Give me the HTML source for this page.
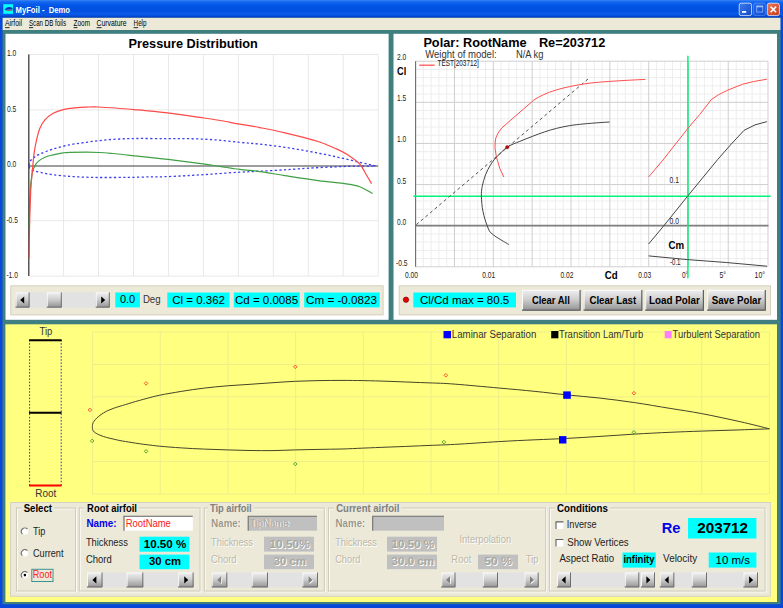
<!DOCTYPE html>
<html><head><meta charset="utf-8"><title>MyFoil - Demo</title>
<style>html,body{margin:0;padding:0;background:#3f7f7f;overflow:hidden}svg{display:block;font-family:"Liberation Sans", sans-serif}</style>
</head><body>
<svg width="783" height="608" viewBox="0 0 783 608">
<defs>
<linearGradient id="tb" x1="0" y1="0" x2="0" y2="1">
<stop offset="0" stop-color="#3b86f5"/><stop offset="0.08" stop-color="#1a6cf2"/><stop offset="0.2" stop-color="#0a5eec"/><stop offset="0.36" stop-color="#0354e4"/><stop offset="0.6" stop-color="#0250e0"/><stop offset="0.78" stop-color="#0a5aea"/><stop offset="0.87" stop-color="#0650dc"/><stop offset="1" stop-color="#0036b8"/>
</linearGradient>
<linearGradient id="btn" x1="0" y1="0" x2="0" y2="1">
<stop offset="0" stop-color="#f0f0f0"/><stop offset="0.45" stop-color="#cfcfcf"/><stop offset="1" stop-color="#929292"/>
</linearGradient>
<linearGradient id="cb" x1="0" y1="0" x2="1" y2="1">
<stop offset="0" stop-color="#3c7cf0"/><stop offset="1" stop-color="#1648c8"/>
</linearGradient>
<linearGradient id="cx" x1="0" y1="0" x2="1" y2="1">
<stop offset="0" stop-color="#ee7a5a"/><stop offset="1" stop-color="#c83a18"/>
</linearGradient>
</defs>

<rect x="0.00" y="0.00" width="783.00" height="608.00" fill="#3f7f7f" />
<rect x="0.00" y="0.00" width="783.00" height="17.80" fill="url(#tb)" />
<rect x="2.30" y="17.80" width="778.40" height="12.20" fill="#ece9d8" />
<rect x="0.00" y="17.00" width="2.50" height="591.00" fill="#0848dc" />
<rect x="780.60" y="17.00" width="2.40" height="591.00" fill="#0848dc" />
<rect x="0.00" y="604.20" width="783.00" height="3.80" fill="#0848dc" />
<rect x="3.30" y="4.20" width="9.70" height="9.60" fill="#00ffff" />
<path d="M4.5,10 C6,7 9,6.1 12.3,7.8 L12.5,9.7 C9.5,9.3 7,9.7 4.5,10 Z" fill="#1030c0"/>
<path d="M4.5,10.1 C7,9.8 9.5,9.5 12.5,9.8 L12.4,10.6 C9.5,10.8 7,10.9 4.5,10.1 Z" fill="#d02020"/>
<text x="15.50" y="13.00" font-size="9" fill="#fff" font-weight="bold" textLength="54.50" lengthAdjust="spacingAndGlyphs" style="white-space:pre">MyFoil -  Demo</text>
<rect x="739.2" y="3.2" width="12.4" height="12.4" rx="2" fill="url(#cb)" stroke="#ffffff" stroke-opacity="0.9" stroke-width="0.8" opacity="1"/>
<rect x="742.00" y="11.00" width="4.20" height="1.80" fill="#fff" />
<rect x="753.5" y="3.2" width="11.9" height="12.4" rx="2" fill="url(#cb)" stroke="#ffffff" stroke-opacity="0.5" stroke-width="0.8" opacity="0.55"/>
<rect x="756.7" y="6" width="6" height="6" fill="none" stroke="#fff" stroke-opacity="0.45" stroke-width="1"/>
<rect x="756.7" y="5.8" width="6" height="1.6" fill="#fff" fill-opacity="0.45"/>
<rect x="767.3" y="3.2" width="12.1" height="12.4" rx="2" fill="url(#cx)" stroke="#ffffff" stroke-opacity="0.9" stroke-width="0.8" opacity="1"/>
<path d="M770.55,6.6000000000000005 L776.1499999999999,12.2 M776.1499999999999,6.6000000000000005 L770.55,12.2" stroke="#fff" stroke-width="1.5" fill="none"/>
<text x="5.1" y="26.3" font-size="8.2" fill="#000" textLength="16.9" lengthAdjust="spacingAndGlyphs"><tspan text-decoration="underline">A</tspan>irfoil</text>
<text x="29" y="26.3" font-size="8.2" fill="#000" textLength="37.0" lengthAdjust="spacingAndGlyphs"><tspan text-decoration="underline">S</tspan>can DB foils</text>
<text x="73.6" y="26.3" font-size="8.2" fill="#000" textLength="16.4" lengthAdjust="spacingAndGlyphs"><tspan text-decoration="underline">Z</tspan>oom</text>
<text x="96.6" y="26.3" font-size="8.2" fill="#000" textLength="29.9" lengthAdjust="spacingAndGlyphs"><tspan text-decoration="underline">C</tspan>urvature</text>
<text x="133.6" y="26.3" font-size="8.2" fill="#000" textLength="12.9" lengthAdjust="spacingAndGlyphs"><tspan text-decoration="underline">H</tspan>elp</text>
<rect x="5.50" y="33.80" width="383.10" height="286.00" fill="#ffffff" />
<text x="128.60" y="48.30" font-size="12.6" fill="#000" font-weight="bold" textLength="129.30" lengthAdjust="spacingAndGlyphs" >Pressure Distribution</text>
<path d="M63.56,54.5 V276.1 M98.52,54.5 V276.1 M133.48,54.5 V276.1 M168.44,54.5 V276.1 M203.40,54.5 V276.1 M238.36,54.5 V276.1 M273.32,54.5 V276.1 M308.28,54.5 V276.1 M343.24,54.5 V276.1 M378.20,54.5 V276.1 M28.6,54.50 H378.2 M28.6,109.90 H378.2 M28.6,220.70 H378.2 M28.6,276.10 H378.2" stroke="#e8e8e8" stroke-width="1" fill="none"/>
<path d="M28.6,166.0 H378.2" stroke="#7c7c7c" stroke-width="1.6" fill="none"/>
<path d="M28.8,54.5 V276.1" stroke="#404040" stroke-width="1.1" fill="none"/>
<text x="7.00" y="56.30" font-size="8.6" fill="#222" font-weight="normal" textLength="9.30" lengthAdjust="spacingAndGlyphs" >1.0</text>
<text x="7.00" y="111.80" font-size="8.6" fill="#222" font-weight="normal" textLength="9.30" lengthAdjust="spacingAndGlyphs" >0.5</text>
<text x="7.00" y="167.30" font-size="8.6" fill="#222" font-weight="normal" textLength="9.30" lengthAdjust="spacingAndGlyphs" >0.0</text>
<text x="6.40" y="222.80" font-size="8.6" fill="#222" font-weight="normal" textLength="11.50" lengthAdjust="spacingAndGlyphs" >-0.5</text>
<text x="6.40" y="277.80" font-size="8.6" fill="#222" font-weight="normal" textLength="11.50" lengthAdjust="spacingAndGlyphs" >-1.0</text>
<path d="M28.9,165.5 C29.1,164.8 29.3,162.7 30.0,161.5 C30.7,160.3 31.6,159.3 33.3,158.1 C34.9,156.8 36.6,155.5 39.9,154.0 C43.2,152.5 48.2,150.5 53.2,149.0 C58.2,147.5 64.3,145.9 69.8,144.8 C75.3,143.7 80.9,143.1 86.4,142.3 C91.9,141.5 97.5,140.8 103.0,140.2 C108.5,139.6 114.2,139.3 119.7,139.0 C125.2,138.7 128.8,138.6 136.3,138.5 C143.9,138.4 156.1,138.6 165.0,138.6 C173.9,138.6 181.5,138.5 189.8,138.7 C198.1,138.9 206.4,139.2 214.7,139.8 C223.0,140.4 232.1,141.6 239.7,142.3 C247.2,143.0 252.5,143.4 260.0,144.2 C267.5,145.0 276.6,146.1 284.9,147.3 C293.2,148.5 301.5,150.0 309.8,151.5 C318.1,153.0 326.5,154.7 334.8,156.5 C343.1,158.3 352.8,160.7 359.7,162.3 C366.6,163.9 373.3,165.4 376.0,166.0" fill="none" stroke="#3c3cf0" stroke-width="1.3" stroke-dasharray="2.2 2.4"/>
<path d="M28.9,166.5 C29.1,166.8 29.3,167.8 30.0,168.5 C30.7,169.2 31.4,169.9 33.3,170.6 C35.2,171.3 38.3,171.9 41.6,172.6 C44.9,173.3 48.5,174.1 53.2,174.7 C57.9,175.3 64.3,176.0 69.8,176.4 C75.3,176.8 80.9,177.0 86.4,177.2 C91.9,177.4 96.1,177.5 103.0,177.5 C109.9,177.5 120.2,177.5 128.0,177.4 C135.8,177.3 143.8,177.0 150.0,176.9 C156.2,176.8 158.4,176.9 165.0,176.7 C171.6,176.5 181.5,176.0 189.8,175.5 C198.1,175.0 206.4,174.5 214.7,173.9 C223.0,173.3 232.1,172.6 239.7,172.2 C247.2,171.8 252.5,171.6 260.0,171.2 C267.5,170.8 276.6,170.3 284.9,169.8 C293.2,169.3 301.5,168.6 309.8,168.1 C318.1,167.6 327.1,167.2 334.8,166.9 C342.6,166.6 349.4,166.2 356.3,166.1 C363.2,166.0 372.7,166.1 376.0,166.1" fill="none" stroke="#3c3cf0" stroke-width="1.3" stroke-dasharray="2.2 2.4"/>
<path d="M28.9,229.0 C29.0,225.0 29.4,211.8 29.6,205.0 C29.9,198.2 30.1,192.2 30.4,188.0 C30.7,183.8 30.9,182.5 31.3,179.7 C31.7,176.9 31.9,173.8 32.5,171.4 C33.1,169.1 34.0,167.3 35.0,165.6 C36.0,163.9 36.6,162.8 38.3,161.4 C39.9,160.0 42.4,158.4 44.9,157.3 C47.4,156.2 50.2,155.6 53.2,154.8 C56.2,154.1 60.4,153.2 63.2,152.8 C66.0,152.4 65.9,152.4 69.8,152.3 C73.7,152.2 81.4,152.2 86.4,152.2 C91.4,152.2 95.3,152.3 99.7,152.5 C104.1,152.7 108.3,153.1 113.0,153.5 C117.7,153.9 123.5,154.6 128.0,155.1 C132.5,155.6 133.3,155.7 140.0,156.4 C146.7,157.1 157.7,158.2 168.2,159.4 C178.7,160.7 194.4,162.7 203.0,163.9 C211.6,165.1 213.6,165.5 219.7,166.4 C225.8,167.3 233.0,168.5 239.7,169.4 C246.4,170.3 252.5,170.6 260.0,171.6 C267.5,172.6 275.2,174.1 284.9,175.6 C294.6,177.1 307.9,179.2 318.1,180.6 C328.4,182.0 339.5,182.9 346.4,183.9 C353.3,184.9 355.3,185.1 359.7,186.7 C364.1,188.3 370.5,192.4 372.6,193.5" fill="none" stroke="#3fa043" stroke-width="1.2" />
<path d="M28.9,258.0 C29.0,252.5 29.3,236.4 29.6,225.0 C29.9,213.6 30.3,198.9 30.8,189.7 C31.3,180.5 31.9,175.8 32.5,169.7 C33.0,163.6 33.4,158.1 34.1,153.1 C34.8,148.1 35.6,144.0 36.6,139.8 C37.6,135.7 38.5,131.5 39.9,128.2 C41.3,124.9 42.7,122.4 44.9,119.9 C47.1,117.4 50.2,115.0 53.2,113.3 C56.2,111.6 59.6,110.5 63.2,109.6 C66.8,108.7 70.9,108.2 74.8,107.8 C78.7,107.4 82.5,107.2 86.4,107.1 C90.3,107.0 93.3,106.8 98.1,107.0 C102.9,107.2 109.4,107.6 115.3,108.0 C121.2,108.4 127.8,109.1 133.7,109.6 C139.6,110.1 145.0,110.5 150.6,111.1 C156.2,111.6 161.5,112.2 167.4,112.9 C173.3,113.6 179.7,114.6 185.8,115.4 C191.9,116.2 198.5,117.2 204.2,118.0 C209.9,118.8 214.1,119.5 220.0,120.5 C225.9,121.5 233.0,122.9 239.7,124.1 C246.4,125.3 252.5,126.1 260.0,127.6 C267.5,129.1 275.2,130.6 284.9,132.9 C294.6,135.2 309.8,138.9 318.1,141.5 C326.4,144.1 330.1,146.1 334.8,148.2 C339.5,150.3 342.2,151.4 346.4,154.0 C350.5,156.6 356.4,160.5 359.7,164.0 C363.0,167.5 364.3,171.5 366.3,174.8 C368.3,178.1 370.7,182.1 371.6,183.6" fill="none" stroke="#ff4848" stroke-width="1.2" />
<path d="M28.8,54.5 V276.1" stroke="#303030" stroke-width="1.1" stroke-opacity="0.45" fill="none"/>
<rect x="10.30" y="285.40" width="373.20" height="29.90" fill="#ece9d8" />
<rect x="10.80" y="285.90" width="372.20" height="28.90" fill="none" stroke="#d6d2c2" stroke-width="1"/>
<rect x="15.60" y="292.40" width="94.20" height="15.20" fill="#e2e2e2" />
<rect x="15.60" y="292.40" width="14.00" height="15.20" fill="url(#btn)" />
<path d="M16.10,307.10 L16.10,292.90 L29.10,292.90" fill="none" stroke="#f8f8f8" stroke-width="1"/>
<path d="M15.60,307.10 L29.10,307.10 L29.10,292.40" fill="none" stroke="#6e6e6e" stroke-width="1"/>
<path d="M20.20,300.00 L24.20,296.40 L24.20,303.60 Z" fill="#000"/>
<rect x="46.80" y="292.40" width="15.00" height="15.20" fill="url(#btn)" />
<path d="M47.30,307.10 L47.30,292.90 L61.30,292.90" fill="none" stroke="#f8f8f8" stroke-width="1"/>
<path d="M46.80,307.10 L61.30,307.10 L61.30,292.40" fill="none" stroke="#6e6e6e" stroke-width="1"/>
<rect x="95.80" y="292.40" width="14.00" height="15.20" fill="url(#btn)" />
<path d="M96.30,307.10 L96.30,292.90 L109.30,292.90" fill="none" stroke="#f8f8f8" stroke-width="1"/>
<path d="M95.80,307.10 L109.30,307.10 L109.30,292.40" fill="none" stroke="#6e6e6e" stroke-width="1"/>
<path d="M105.20,300.00 L101.20,296.40 L101.20,303.60 Z" fill="#000"/>
<rect x="115.30" y="292.50" width="24.60" height="14.90" fill="#00ffff" />
<text x="119.90" y="303.40" font-size="11" fill="#000" font-weight="normal" textLength="15.30" lengthAdjust="spacingAndGlyphs" >0.0</text>
<text x="142.90" y="303.20" font-size="10.2" fill="#333" font-weight="normal" textLength="17.70" lengthAdjust="spacingAndGlyphs" >Deg</text>
<rect x="167.30" y="292.50" width="62.20" height="14.90" fill="#00ffff" />
<text x="172.30" y="303.50" font-size="11.6" fill="#000" font-weight="normal" textLength="52.60" lengthAdjust="spacingAndGlyphs" >Cl = 0.362</text>
<rect x="233.80" y="292.50" width="65.90" height="14.90" fill="#00ffff" />
<text x="235.00" y="303.50" font-size="11.6" fill="#000" font-weight="normal" textLength="63.10" lengthAdjust="spacingAndGlyphs" >Cd = 0.0085</text>
<rect x="304.20" y="292.50" width="75.50" height="14.90" fill="#00ffff" />
<text x="306.10" y="303.50" font-size="11.6" fill="#000" font-weight="normal" textLength="70.80" lengthAdjust="spacingAndGlyphs" >Cm = -0.0823</text>
<rect x="393.50" y="33.80" width="383.50" height="286.00" fill="#ffffff" />
<text x="423.40" y="47.30" font-size="12.6" fill="#000" font-weight="bold" textLength="103.20" lengthAdjust="spacingAndGlyphs" >Polar: RootName</text>
<text x="538.90" y="47.30" font-size="12.6" fill="#000" font-weight="bold" textLength="66.40" lengthAdjust="spacingAndGlyphs" >Re=203712</text>
<text x="425.20" y="57.50" font-size="10.6" fill="#333" font-weight="normal" textLength="71.50" lengthAdjust="spacingAndGlyphs" >Weight of model:</text>
<text x="515.90" y="57.50" font-size="10.6" fill="#333" font-weight="normal" textLength="27.60" lengthAdjust="spacingAndGlyphs" >N/A kg</text>
<path d="M423.37,61.2 V266.8 M431.14,61.2 V266.8 M438.91,61.2 V266.8 M446.68,61.2 V266.8 M462.22,61.2 V266.8 M469.99,61.2 V266.8 M477.76,61.2 V266.8 M485.53,61.2 V266.8 M501.07,61.2 V266.8 M508.84,61.2 V266.8 M516.61,61.2 V266.8 M524.38,61.2 V266.8 M539.92,61.2 V266.8 M547.69,61.2 V266.8 M555.46,61.2 V266.8 M563.23,61.2 V266.8 M578.77,61.2 V266.8 M586.54,61.2 V266.8 M594.31,61.2 V266.8 M602.08,61.2 V266.8 M617.62,61.2 V266.8 M625.39,61.2 V266.8 M633.16,61.2 V266.8 M640.93,61.2 V266.8 M656.65,61.2 V266.8 M664.61,61.2 V266.8 M672.56,61.2 V266.8 M680.51,61.2 V266.8 M696.42,61.2 V266.8 M704.37,61.2 V266.8 M712.33,61.2 V266.8 M720.28,61.2 V266.8 M736.19,61.2 V266.8 M744.14,61.2 V266.8 M752.09,61.2 V266.8 M760.05,61.2 V266.8 M415.6,69.42 H768 M415.6,77.65 H768 M415.6,85.87 H768 M415.6,94.10 H768 M415.6,110.54 H768 M415.6,118.77 H768 M415.6,126.99 H768 M415.6,135.22 H768 M415.6,151.66 H768 M415.6,159.89 H768 M415.6,168.11 H768 M415.6,176.34 H768 M415.6,192.78 H768 M415.6,201.01 H768 M415.6,209.23 H768 M415.6,217.46 H768 M415.6,233.90 H768 M415.6,242.13 H768 M415.6,250.35 H768 M415.6,258.58 H768" stroke="#ededed" stroke-width="1" fill="none"/>
<path d="M415.60,61.2 V266.8 M454.45,61.2 V266.8 M493.30,61.2 V266.8 M532.15,61.2 V266.8 M571.00,61.2 V266.8 M609.85,61.2 V266.8 M648.70,61.2 V266.8 M688.47,61.2 V266.8 M728.23,61.2 V266.8 M768.00,61.2 V266.8 M415.6,61.20 H768 M415.6,102.32 H768 M415.6,143.44 H768 M415.6,184.56 H768 M415.6,225.68 H768 M415.6,266.80 H768" stroke="#cfcfcf" stroke-width="1" fill="none"/>
<path d="M415.6,225.68 H768.5" stroke="#808080" stroke-width="1.7" fill="none"/>
<path d="M415.6,61.2 V266.8" stroke="#6a6a6a" stroke-width="1.05" fill="none"/>
<text x="397.00" y="60.20" font-size="8.6" fill="#222" font-weight="normal" textLength="9.20" lengthAdjust="spacingAndGlyphs" >2.0</text>
<text x="397.00" y="101.32" font-size="8.6" fill="#222" font-weight="normal" textLength="9.20" lengthAdjust="spacingAndGlyphs" >1.5</text>
<text x="397.00" y="142.44" font-size="8.6" fill="#222" font-weight="normal" textLength="9.20" lengthAdjust="spacingAndGlyphs" >1.0</text>
<text x="397.00" y="183.56" font-size="8.6" fill="#222" font-weight="normal" textLength="9.20" lengthAdjust="spacingAndGlyphs" >0.5</text>
<text x="397.00" y="224.68" font-size="8.6" fill="#222" font-weight="normal" textLength="9.20" lengthAdjust="spacingAndGlyphs" >0.0</text>
<text x="396.00" y="265.80" font-size="8.6" fill="#222" font-weight="normal" textLength="11.50" lengthAdjust="spacingAndGlyphs" >-0.5</text>
<text x="397.00" y="75.20" font-size="10.6" fill="#000" font-weight="bold" textLength="9.20" lengthAdjust="spacingAndGlyphs" >Cl</text>
<text x="405.00" y="278.00" font-size="8.6" fill="#222" font-weight="normal" textLength="13.00" lengthAdjust="spacingAndGlyphs" >0.00</text>
<text x="482.30" y="278.00" font-size="8.6" fill="#222" font-weight="normal" textLength="13.00" lengthAdjust="spacingAndGlyphs" >0.01</text>
<text x="560.40" y="278.00" font-size="8.6" fill="#222" font-weight="normal" textLength="13.00" lengthAdjust="spacingAndGlyphs" >0.02</text>
<text x="638.20" y="278.00" font-size="8.6" fill="#222" font-weight="normal" textLength="13.00" lengthAdjust="spacingAndGlyphs" >0.03</text>
<text x="604.70" y="278.60" font-size="10.6" fill="#000" font-weight="bold" textLength="12.90" lengthAdjust="spacingAndGlyphs" >Cd</text>
<text x="682.00" y="278.00" font-size="8.6" fill="#222" font-weight="normal" textLength="6.20" lengthAdjust="spacingAndGlyphs" >0°</text>
<text x="719.40" y="278.00" font-size="8.6" fill="#222" font-weight="normal" textLength="6.60" lengthAdjust="spacingAndGlyphs" >5°</text>
<text x="754.60" y="278.00" font-size="8.6" fill="#222" font-weight="normal" textLength="10.40" lengthAdjust="spacingAndGlyphs" >10°</text>
<text x="669.60" y="183.00" font-size="8.6" fill="#222" font-weight="normal" textLength="9.40" lengthAdjust="spacingAndGlyphs" >0.1</text>
<text x="669.60" y="223.80" font-size="8.6" fill="#222" font-weight="normal" textLength="9.40" lengthAdjust="spacingAndGlyphs" >0.0</text>
<text x="668.40" y="248.60" font-size="10.6" fill="#000" font-weight="bold" textLength="15.60" lengthAdjust="spacingAndGlyphs" >Cm</text>
<text x="670.00" y="265.40" font-size="8.6" fill="#222" font-weight="normal" textLength="10.50" lengthAdjust="spacingAndGlyphs" >-0.1</text>
<path d="M419.2,65.2 H434.7" stroke="#ff4848" stroke-width="1.2"/>
<text x="437.50" y="66.40" font-size="8.4" fill="#222" font-weight="normal" textLength="41.40" lengthAdjust="spacingAndGlyphs" >TEST[203712]</text>
<path d="M413.3,196.3 H770.7" stroke="#00f47a" stroke-width="1.5"/>
<path d="M687.9,55.8 V278.2" stroke="#00f47a" stroke-width="1.5"/>
<path d="M416.4,224.6 L589.3,77.9" stroke="#505050" stroke-width="1" stroke-dasharray="3 3" fill="none"/>
<path d="M503.8,177.0 L499.7,168.2 L496.3,156.6 L495.0,148.0 L495.2,142.0 L495.8,138.0 L498.0,133.2 L501.6,128.1 L534.0,99.9 L538.5,97.2 L543.1,94.9 L549.5,92.2 L556.4,89.9 L563.0,88.1 L569.7,86.6 L576.0,85.3 L583.0,84.1 L591.0,83.0 L600.0,82.1 L609.6,81.4 L627.0,80.3 L645.4,79.4" fill="none" stroke="#ff5050" stroke-width="1.0" />
<path d="M508.8,244.5 C506.0,242.8 495.8,237.1 492.2,234.0 C488.6,230.9 488.7,229.4 487.2,225.7 C485.7,222.0 484.0,216.5 483.0,211.6 C482.0,206.7 481.5,200.6 481.4,196.4 C481.3,192.2 481.5,190.1 482.2,186.5 C482.9,182.9 484.1,178.5 485.5,174.9 C486.9,171.3 488.7,167.8 490.5,164.9 C492.3,162.0 493.5,160.4 496.3,157.4 C499.1,154.4 503.3,149.9 507.2,147.2 C511.1,144.5 515.6,143.2 519.8,141.4 C524.0,139.6 528.1,138.0 532.3,136.4 C536.5,134.8 540.8,133.1 544.8,131.8 C548.8,130.5 552.2,129.4 556.4,128.4 C560.5,127.4 565.3,126.3 569.7,125.6 C574.1,124.9 578.0,124.5 583.0,124.0 C588.0,123.5 595.6,122.9 600.0,122.6 C604.4,122.3 608.0,122.1 609.6,122.0" fill="none" stroke="#444444" stroke-width="1.0" />
<circle cx="507.2" cy="147.2" r="1.6" fill="#e00000" stroke="#600000" stroke-width="0.5"/>
<path d="M648.6,177.0 L663.0,160.0 L688.0,128.2 L700.0,114.2 L711.2,99.7 L718.5,94.7 L727.7,90.2 L742.3,84.3 L753.2,81.6 L766.9,79.2" fill="none" stroke="#ff5050" stroke-width="1.0" />
<path d="M648.6,244.0 L663.4,226.3 L687.6,196.2 L717.6,159.6 L731.3,144.0 L744.1,130.3 L755.0,124.9 L766.9,121.6" fill="none" stroke="#444444" stroke-width="1.0" />
<path d="M648.6,255.9 L687.6,259.6 L726.3,262.5 L767.0,266.2" fill="none" stroke="#444444" stroke-width="1.0" />
<rect x="398.80" y="285.40" width="372.20" height="29.90" fill="#ece9d8" />
<rect x="399.30" y="285.90" width="371.20" height="28.90" fill="none" stroke="#d6d2c2" stroke-width="1"/>
<circle cx="406" cy="299.7" r="2.7" fill="#e60000" stroke="#700000" stroke-width="0.6"/>
<rect x="413.30" y="292.50" width="102.70" height="14.90" fill="#00ffff" />
<text x="419.90" y="303.50" font-size="11.6" fill="#000" font-weight="normal" textLength="89.40" lengthAdjust="spacingAndGlyphs" >Cl/Cd max = 80.5</text>
<rect x="522.00" y="289.90" width="58.60" height="20.70" fill="url(#btn)" />
<path d="M522.50,310.10 L522.50,290.40 L580.10,290.40" fill="none" stroke="#fafafa" stroke-width="1"/>
<path d="M522.00,310.10 L580.10,310.10 L580.10,289.90" fill="none" stroke="#606060" stroke-width="1.2"/>
<text x="531.90" y="303.60" font-size="10.2" fill="#000" font-weight="bold" textLength="37.90" lengthAdjust="spacingAndGlyphs" >Clear All</text>
<rect x="583.60" y="289.90" width="58.70" height="20.70" fill="url(#btn)" />
<path d="M584.10,310.10 L584.10,290.40 L641.80,290.40" fill="none" stroke="#fafafa" stroke-width="1"/>
<path d="M583.60,310.10 L641.80,310.10 L641.80,289.90" fill="none" stroke="#606060" stroke-width="1.2"/>
<text x="589.40" y="303.60" font-size="10.2" fill="#000" font-weight="bold" textLength="46.80" lengthAdjust="spacingAndGlyphs" >Clear Last</text>
<rect x="645.20" y="289.90" width="58.70" height="20.70" fill="url(#btn)" />
<path d="M645.70,310.10 L645.70,290.40 L703.40,290.40" fill="none" stroke="#fafafa" stroke-width="1"/>
<path d="M645.20,310.10 L703.40,310.10 L703.40,289.90" fill="none" stroke="#606060" stroke-width="1.2"/>
<text x="649.00" y="303.60" font-size="10.2" fill="#000" font-weight="bold" textLength="50.80" lengthAdjust="spacingAndGlyphs" >Load Polar</text>
<rect x="707.20" y="289.90" width="58.60" height="20.70" fill="url(#btn)" />
<path d="M707.70,310.10 L707.70,290.40 L765.30,290.40" fill="none" stroke="#fafafa" stroke-width="1"/>
<path d="M707.20,310.10 L765.30,310.10 L765.30,289.90" fill="none" stroke="#606060" stroke-width="1.2"/>
<text x="711.70" y="303.60" font-size="10.2" fill="#000" font-weight="bold" textLength="49.60" lengthAdjust="spacingAndGlyphs" >Save Polar</text>
<rect x="5.40" y="324.30" width="771.60" height="277.70" fill="#ffff80" />
<path d="M92.60,332 V494 M160.28,332 V494 M227.96,332 V494 M295.64,332 V494 M363.32,332 V494 M431.00,332 V494 M498.68,332 V494 M566.36,332 V494 M634.04,332 V494 M701.72,332 V494 M769.40,332 V494 M92.6,332.00 H769.4 M92.6,364.40 H769.4 M92.6,396.80 H769.4 M92.6,429.20 H769.4 M92.6,461.60 H769.4 M92.6,494.00 H769.4" stroke="#eeee8a" stroke-width="1" fill="none"/>
<path d="M29.6,340 V486 M61.2,340 V486" stroke="#2828f0" stroke-width="1" stroke-dasharray="1.5 1.7" fill="none"/>
<path d="M29,340.3 H61.6" stroke="#000" stroke-width="2"/>
<path d="M29,412.8 H61.6" stroke="#000" stroke-width="2"/>
<path d="M29,485.6 H61.6" stroke="#ff0000" stroke-width="2"/>
<text x="39.50" y="335.20" font-size="10" fill="#333" font-weight="normal" textLength="12.80" lengthAdjust="spacingAndGlyphs" >Tip</text>
<text x="35.30" y="497.00" font-size="10" fill="#333" font-weight="normal" textLength="21.00" lengthAdjust="spacingAndGlyphs" >Root</text>
<rect x="443.50" y="331.00" width="7.50" height="7.30" fill="#0000ff" />
<text x="451.80" y="338.20" font-size="10" fill="#333" font-weight="normal" textLength="84.50" lengthAdjust="spacingAndGlyphs" >Laminar Separation</text>
<rect x="551.20" y="331.00" width="7.20" height="7.30" fill="#000" />
<text x="559.00" y="338.20" font-size="10" fill="#333" font-weight="normal" textLength="84.20" lengthAdjust="spacingAndGlyphs" >Transition Lam/Turb</text>
<rect x="664.70" y="331.00" width="7.00" height="7.30" fill="#ff80ff" />
<text x="672.50" y="338.20" font-size="10" fill="#333" font-weight="normal" textLength="87.50" lengthAdjust="spacingAndGlyphs" >Turbulent Separation</text>
<path d="M92.3,427.1 C92.4,426.6 92.4,424.9 92.7,423.9 C93.0,422.9 93.4,422.2 94.1,421.2 C94.8,420.2 95.6,419.1 96.8,418.0 C98.0,416.9 99.4,415.7 101.0,414.6 C102.6,413.5 104.2,412.4 106.4,411.3 C108.6,410.2 111.2,409.2 113.9,408.2 C116.6,407.2 118.8,406.6 122.4,405.5 C126.0,404.4 131.4,402.8 135.3,401.6 C139.2,400.5 142.0,399.7 146.1,398.6 C150.2,397.5 153.9,396.4 159.8,395.2 C165.7,394.0 173.9,392.6 181.3,391.4 C188.7,390.2 196.6,389.0 204.3,388.1 C212.0,387.2 219.7,386.4 227.3,385.8 C234.9,385.2 242.4,384.8 250.0,384.3 C257.6,383.8 265.4,383.2 273.0,382.7 C280.6,382.2 287.6,381.6 295.3,381.3 C303.0,381.0 311.2,380.8 319.0,380.6 C326.8,380.5 334.6,380.4 342.0,380.4 C349.4,380.4 355.6,380.5 363.3,380.6 C371.0,380.8 380.1,381.0 388.1,381.3 C396.1,381.6 404.1,381.9 411.1,382.2 C418.1,382.5 422.8,382.6 430.0,382.9 C437.2,383.2 443.1,383.2 454.5,384.1 C465.9,385.0 485.3,386.8 498.7,388.0 C512.1,389.2 523.8,390.2 535.1,391.4 C546.4,392.5 555.8,393.8 566.6,394.9 C577.4,396.0 588.7,396.8 600.0,398.1 C611.3,399.4 622.9,400.9 634.6,402.6 C646.3,404.3 658.9,406.6 670.1,408.4 C681.3,410.2 690.0,411.4 701.7,413.6 C713.4,415.8 728.9,419.2 740.2,421.7 C751.5,424.2 764.5,427.6 769.4,428.8" fill="none" stroke="#44442a" stroke-width="1.0" />
<path d="M92.3,427.1 C92.4,427.6 92.4,429.0 92.7,429.8 C93.0,430.6 93.4,431.2 94.1,431.9 C94.8,432.5 95.6,433.1 96.8,433.7 C98.0,434.3 99.4,435.0 101.0,435.6 C102.6,436.2 104.2,436.8 106.4,437.4 C108.6,438.0 111.2,438.6 113.9,439.2 C116.6,439.8 118.8,440.4 122.4,441.0 C126.0,441.6 131.4,442.5 135.3,443.1 C139.2,443.7 142.0,444.1 146.1,444.6 C150.2,445.1 153.9,445.6 159.8,446.2 C165.7,446.8 173.9,447.4 181.3,447.9 C188.7,448.4 196.6,448.8 204.3,449.1 C212.0,449.4 219.7,449.7 227.3,449.9 C234.9,450.1 242.4,450.4 250.0,450.5 C257.6,450.6 265.4,450.7 273.0,450.6 C280.6,450.5 287.6,450.1 295.3,449.9 C303.0,449.7 311.2,449.5 319.0,449.4 C326.8,449.2 334.6,449.2 342.0,449.0 C349.4,448.8 355.6,448.4 363.3,448.1 C371.0,447.8 380.1,447.4 388.1,447.1 C396.1,446.8 404.1,446.5 411.1,446.2 C418.1,445.9 422.8,445.7 430.0,445.4 C437.2,445.1 443.1,445.0 454.5,444.4 C465.9,443.8 485.3,442.4 498.7,441.6 C512.1,440.8 523.8,440.3 535.1,439.8 C546.4,439.3 555.8,439.0 566.6,438.4 C577.4,437.8 588.7,437.1 600.0,436.4 C611.3,435.7 622.9,434.8 634.6,434.1 C646.3,433.4 658.9,432.8 670.1,432.3 C681.3,431.8 690.0,431.5 701.7,431.1 C713.4,430.7 728.9,430.3 740.2,429.9 C751.5,429.5 764.5,429.0 769.4,428.8" fill="none" stroke="#44442a" stroke-width="1.0" />
<path d="M144.3,383.4 L146.1,381.6 L147.9,383.4 L146.1,385.2 Z" fill="none" stroke="#ff4020" stroke-width="0.9"/>
<path d="M88.1,409.9 L89.9,408.1 L91.7,409.9 L89.9,411.7 Z" fill="none" stroke="#ff4020" stroke-width="0.9"/>
<path d="M293.5,366.8 L295.3,365.0 L297.1,366.8 L295.3,368.6 Z" fill="none" stroke="#ff4020" stroke-width="0.9"/>
<path d="M444.0,375.3 L445.8,373.5 L447.6,375.3 L445.8,377.1 Z" fill="none" stroke="#ff4020" stroke-width="0.9"/>
<path d="M632.1,393.2 L633.9,391.4 L635.7,393.2 L633.9,395.0 Z" fill="none" stroke="#ff4020" stroke-width="0.9"/>
<path d="M90.4,440.9 L92.2,439.1 L94.0,440.9 L92.2,442.7 Z" fill="none" stroke="#40a020" stroke-width="0.9"/>
<path d="M144.3,451.3 L146.1,449.5 L147.9,451.3 L146.1,453.1 Z" fill="none" stroke="#40a020" stroke-width="0.9"/>
<path d="M293.5,464.0 L295.3,462.2 L297.1,464.0 L295.3,465.8 Z" fill="none" stroke="#40a020" stroke-width="0.9"/>
<path d="M442.1,442.1 L443.9,440.3 L445.7,442.1 L443.9,443.9 Z" fill="none" stroke="#40a020" stroke-width="0.9"/>
<path d="M632.1,432.3 L633.9,430.5 L635.7,432.3 L633.9,434.1 Z" fill="none" stroke="#40a020" stroke-width="0.9"/>
<rect x="563.20" y="391.40" width="7.60" height="7.40" fill="#0000ff" />
<rect x="559.00" y="436.10" width="7.40" height="7.40" fill="#0000ff" />
<rect x="10.00" y="502.00" width="760.80" height="94.70" fill="#ece9d8" />
<rect x="10.50" y="502.50" width="759.80" height="93.70" fill="none" stroke="#d6d2c2" stroke-width="1"/>
<rect x="17.50" y="509.00" width="59.00" height="83.00" fill="none" stroke="#fbfaf4" stroke-width="1"/>
<rect x="16.50" y="508.00" width="59.00" height="83.00" fill="none" stroke="#cfccbc" stroke-width="1"/>
<rect x="21.70" y="505.00" width="32.30" height="6.00" fill="#ece9d8" />
<text x="23.70" y="511.70" font-size="10" fill="#000" font-weight="bold" textLength="28.30" lengthAdjust="spacingAndGlyphs" >Select</text>
<rect x="80.30" y="509.00" width="120.70" height="83.00" fill="none" stroke="#fbfaf4" stroke-width="1"/>
<rect x="79.30" y="508.00" width="120.70" height="83.00" fill="none" stroke="#cfccbc" stroke-width="1"/>
<rect x="85.10" y="505.00" width="53.80" height="6.00" fill="#ece9d8" />
<text x="87.10" y="511.70" font-size="10" fill="#000" font-weight="bold" textLength="49.80" lengthAdjust="spacingAndGlyphs" >Root airfoil</text>
<rect x="205.30" y="509.00" width="120.00" height="83.00" fill="none" stroke="#fbfaf4" stroke-width="1"/>
<rect x="204.30" y="508.00" width="120.00" height="83.00" fill="none" stroke="#cfccbc" stroke-width="1"/>
<rect x="208.00" y="505.00" width="45.70" height="6.00" fill="#ece9d8" />
<text x="210.00" y="511.70" font-size="10" fill="#808080" font-weight="bold" textLength="41.70" lengthAdjust="spacingAndGlyphs" >Tip airfoil</text>
<rect x="329.50" y="509.00" width="217.10" height="83.00" fill="none" stroke="#fbfaf4" stroke-width="1"/>
<rect x="328.50" y="508.00" width="217.10" height="83.00" fill="none" stroke="#cfccbc" stroke-width="1"/>
<rect x="334.20" y="505.00" width="67.10" height="6.00" fill="#ece9d8" />
<text x="336.20" y="511.70" font-size="10" fill="#808080" font-weight="bold" textLength="63.10" lengthAdjust="spacingAndGlyphs" >Current airfoil</text>
<rect x="550.50" y="509.00" width="215.50" height="83.00" fill="none" stroke="#fbfaf4" stroke-width="1"/>
<rect x="549.50" y="508.00" width="215.50" height="83.00" fill="none" stroke="#cfccbc" stroke-width="1"/>
<rect x="555.10" y="505.00" width="54.80" height="6.00" fill="#ece9d8" />
<text x="557.10" y="511.70" font-size="10" fill="#000" font-weight="bold" textLength="50.80" lengthAdjust="spacingAndGlyphs" >Conditions</text>
<circle cx="24.9" cy="531.5" r="3.3" fill="#fff"/>
<path d="M22.40,534.00 A3.5,3.5 0 0 1 27.40,529.00" fill="none" stroke="#6a6a6a" stroke-width="1.1"/>
<circle cx="24.9" cy="553.2" r="3.3" fill="#fff"/>
<path d="M22.40,555.70 A3.5,3.5 0 0 1 27.40,550.70" fill="none" stroke="#6a6a6a" stroke-width="1.1"/>
<circle cx="24.9" cy="575.1" r="3.3" fill="#fff"/>
<path d="M22.40,577.60 A3.5,3.5 0 0 1 27.40,572.60" fill="none" stroke="#6a6a6a" stroke-width="1.1"/>
<circle cx="24.9" cy="575.1" r="1.3" fill="#000"/>
<text x="33.00" y="535.00" font-size="10.4" fill="#222" font-weight="normal" textLength="12.30" lengthAdjust="spacingAndGlyphs" >Tip</text>
<text x="33.00" y="556.60" font-size="10.4" fill="#222" font-weight="normal" textLength="30.50" lengthAdjust="spacingAndGlyphs" >Current</text>
<rect x="31.8" y="569.3" width="21.2" height="12.2" fill="none" stroke="#3a9494" stroke-width="1"/>
<text x="32.80" y="578.30" font-size="10.4" fill="#ff2020" font-weight="normal" textLength="19.20" lengthAdjust="spacingAndGlyphs" >Root</text>
<text x="86.50" y="526.50" font-size="10.3" fill="#0000e8" font-weight="bold" textLength="30.10" lengthAdjust="spacingAndGlyphs" >Name:</text>
<rect x="124.00" y="516.00" width="68.80" height="14.70" fill="#ffffff" />
<path d="M124,530.7 V516.3 H192.8" fill="none" stroke="#606060" stroke-width="1.1"/>
<text x="125.70" y="526.50" font-size="10" fill="#ff2020" font-weight="normal" textLength="45.20" lengthAdjust="spacingAndGlyphs" >RootName</text>
<text x="85.90" y="545.90" font-size="10.2" fill="#222" font-weight="normal" textLength="41.90" lengthAdjust="spacingAndGlyphs" >Thickness</text>
<text x="85.90" y="563.30" font-size="10.2" fill="#222" font-weight="normal" textLength="25.80" lengthAdjust="spacingAndGlyphs" >Chord</text>
<rect x="139.50" y="536.70" width="49.80" height="15.00" fill="#00ffff" />
<text x="143.70" y="547.80" font-size="11" fill="#000" font-weight="bold" textLength="42.70" lengthAdjust="spacingAndGlyphs" >10.50 %</text>
<rect x="139.50" y="554.60" width="49.80" height="14.60" fill="#00ffff" />
<text x="149.00" y="565.30" font-size="11" fill="#000" font-weight="bold" textLength="32.00" lengthAdjust="spacingAndGlyphs" >30 cm</text>
<rect x="87.00" y="572.50" width="106.60" height="14.90" fill="#e2e2e2" />
<rect x="87.00" y="572.50" width="15.50" height="14.90" fill="url(#btn)" />
<path d="M87.50,586.90 L87.50,573.00 L102.00,573.00" fill="none" stroke="#f8f8f8" stroke-width="1"/>
<path d="M87.00,586.90 L102.00,586.90 L102.00,572.50" fill="none" stroke="#6e6e6e" stroke-width="1"/>
<path d="M92.35,579.95 L96.35,576.35 L96.35,583.55 Z" fill="#000"/>
<rect x="126.60" y="572.50" width="16.70" height="14.90" fill="url(#btn)" />
<path d="M127.10,586.90 L127.10,573.00 L142.80,573.00" fill="none" stroke="#f8f8f8" stroke-width="1"/>
<path d="M126.60,586.90 L142.80,586.90 L142.80,572.50" fill="none" stroke="#6e6e6e" stroke-width="1"/>
<rect x="178.10" y="572.50" width="15.50" height="14.90" fill="url(#btn)" />
<path d="M178.60,586.90 L178.60,573.00 L193.10,573.00" fill="none" stroke="#f8f8f8" stroke-width="1"/>
<path d="M178.10,586.90 L193.10,586.90 L193.10,572.50" fill="none" stroke="#6e6e6e" stroke-width="1"/>
<path d="M188.25,579.95 L184.25,576.35 L184.25,583.55 Z" fill="#000"/>
<text x="212.10" y="527.30" font-size="10.3" fill="#ffffff" font-weight="bold" textLength="29.50" lengthAdjust="spacingAndGlyphs" >Name:</text>
<text x="211.30" y="526.50" font-size="10.3" fill="#9a978a" font-weight="bold" textLength="29.50" lengthAdjust="spacingAndGlyphs" >Name:</text>
<rect x="248.20" y="516.00" width="68.80" height="14.70" fill="#c0c0c0" />
<path d="M248.2,530.7 V516.3 H317" fill="none" stroke="#707070" stroke-width="1.1"/>
<text x="250.90" y="527.30" font-size="10" fill="#ffffff" font-weight="normal" textLength="38.90" lengthAdjust="spacingAndGlyphs" >TipName</text>
<text x="250.10" y="526.50" font-size="10" fill="#a8a8a0" font-weight="normal" textLength="38.90" lengthAdjust="spacingAndGlyphs" >TipName</text>
<text x="211.80" y="546.70" font-size="10.2" fill="#ffffff" font-weight="normal" textLength="42.00" lengthAdjust="spacingAndGlyphs" >Thickness</text>
<text x="211.00" y="545.90" font-size="10.2" fill="#bcb8a8" font-weight="normal" textLength="42.00" lengthAdjust="spacingAndGlyphs" >Thickness</text>
<text x="211.80" y="564.10" font-size="10.2" fill="#ffffff" font-weight="normal" textLength="25.60" lengthAdjust="spacingAndGlyphs" >Chord</text>
<text x="211.00" y="563.30" font-size="10.2" fill="#bcb8a8" font-weight="normal" textLength="25.60" lengthAdjust="spacingAndGlyphs" >Chord</text>
<rect x="264.00" y="536.70" width="50.00" height="14.90" fill="#c0c0c0" />
<text x="270.30" y="548.60" font-size="11" fill="#ffffff" font-weight="bold" textLength="40.20" lengthAdjust="spacingAndGlyphs" >10.50%</text>
<text x="269.50" y="547.80" font-size="11" fill="#a8a8a0" font-weight="bold" textLength="40.20" lengthAdjust="spacingAndGlyphs" >10.50%</text>
<rect x="264.00" y="554.60" width="50.00" height="14.60" fill="#c0c0c0" />
<text x="274.60" y="566.10" font-size="11" fill="#ffffff" font-weight="bold" textLength="32.20" lengthAdjust="spacingAndGlyphs" >30 cm</text>
<text x="273.80" y="565.30" font-size="11" fill="#a8a8a0" font-weight="bold" textLength="32.20" lengthAdjust="spacingAndGlyphs" >30 cm</text>
<rect x="211.70" y="572.50" width="106.30" height="14.90" fill="#e2e2e2" />
<rect x="211.70" y="572.50" width="15.60" height="14.90" fill="url(#btn)" />
<path d="M212.20,586.90 L212.20,573.00 L226.80,573.00" fill="none" stroke="#f8f8f8" stroke-width="1"/>
<path d="M211.70,586.90 L226.80,586.90 L226.80,572.50" fill="none" stroke="#6e6e6e" stroke-width="1"/>
<path d="M217.90,580.75 L221.90,577.15 L221.90,584.35 Z" fill="#ffffff"/>
<path d="M217.10,579.95 L221.10,576.35 L221.10,583.55 Z" fill="#808080"/>
<rect x="251.70" y="572.50" width="16.30" height="14.90" fill="url(#btn)" />
<path d="M252.20,586.90 L252.20,573.00 L267.50,573.00" fill="none" stroke="#f8f8f8" stroke-width="1"/>
<path d="M251.70,586.90 L267.50,586.90 L267.50,572.50" fill="none" stroke="#6e6e6e" stroke-width="1"/>
<rect x="302.40" y="572.50" width="15.60" height="14.90" fill="url(#btn)" />
<path d="M302.90,586.90 L302.90,573.00 L317.50,573.00" fill="none" stroke="#f8f8f8" stroke-width="1"/>
<path d="M302.40,586.90 L317.50,586.90 L317.50,572.50" fill="none" stroke="#6e6e6e" stroke-width="1"/>
<path d="M313.40,580.75 L309.40,577.15 L309.40,584.35 Z" fill="#ffffff"/>
<path d="M312.60,579.95 L308.60,576.35 L308.60,583.55 Z" fill="#808080"/>
<text x="336.40" y="527.30" font-size="10.3" fill="#ffffff" font-weight="bold" textLength="29.70" lengthAdjust="spacingAndGlyphs" >Name:</text>
<text x="335.60" y="526.50" font-size="10.3" fill="#9a978a" font-weight="bold" textLength="29.70" lengthAdjust="spacingAndGlyphs" >Name:</text>
<rect x="372.70" y="516.00" width="71.30" height="14.70" fill="#c0c0c0" />
<path d="M372.7,530.7 V516.3 H444" fill="none" stroke="#707070" stroke-width="1.1"/>
<text x="336.00" y="546.70" font-size="10.2" fill="#ffffff" font-weight="normal" textLength="41.70" lengthAdjust="spacingAndGlyphs" >Thickness</text>
<text x="335.20" y="545.90" font-size="10.2" fill="#bcb8a8" font-weight="normal" textLength="41.70" lengthAdjust="spacingAndGlyphs" >Thickness</text>
<text x="336.00" y="564.10" font-size="10.2" fill="#ffffff" font-weight="normal" textLength="25.20" lengthAdjust="spacingAndGlyphs" >Chord</text>
<text x="335.20" y="563.30" font-size="10.2" fill="#bcb8a8" font-weight="normal" textLength="25.20" lengthAdjust="spacingAndGlyphs" >Chord</text>
<rect x="387.00" y="536.70" width="50.00" height="14.90" fill="#c0c0c0" />
<text x="392.30" y="548.60" font-size="11" fill="#ffffff" font-weight="bold" textLength="42.70" lengthAdjust="spacingAndGlyphs" >10.50 %</text>
<text x="391.50" y="547.80" font-size="11" fill="#a8a8a0" font-weight="bold" textLength="42.70" lengthAdjust="spacingAndGlyphs" >10.50 %</text>
<rect x="387.00" y="554.60" width="50.00" height="14.60" fill="#c0c0c0" />
<text x="392.30" y="566.10" font-size="11" fill="#ffffff" font-weight="bold" textLength="42.70" lengthAdjust="spacingAndGlyphs" >30.0 cm</text>
<text x="391.50" y="565.30" font-size="11" fill="#a8a8a0" font-weight="bold" textLength="42.70" lengthAdjust="spacingAndGlyphs" >30.0 cm</text>
<text x="460.30" y="544.20" font-size="10" fill="#ffffff" font-weight="normal" textLength="51.60" lengthAdjust="spacingAndGlyphs" >Interpolation</text>
<text x="459.50" y="543.40" font-size="10" fill="#bcb8a8" font-weight="normal" textLength="51.60" lengthAdjust="spacingAndGlyphs" >Interpolation</text>
<text x="452.10" y="564.10" font-size="10" fill="#ffffff" font-weight="normal" textLength="20.00" lengthAdjust="spacingAndGlyphs" >Root</text>
<text x="451.30" y="563.30" font-size="10" fill="#bcb8a8" font-weight="normal" textLength="20.00" lengthAdjust="spacingAndGlyphs" >Root</text>
<rect x="478.00" y="554.60" width="40.00" height="14.60" fill="#c0c0c0" />
<text x="485.10" y="566.10" font-size="11" fill="#ffffff" font-weight="bold" textLength="27.60" lengthAdjust="spacingAndGlyphs" >50 %</text>
<text x="484.30" y="565.30" font-size="11" fill="#a8a8a0" font-weight="bold" textLength="27.60" lengthAdjust="spacingAndGlyphs" >50 %</text>
<text x="526.80" y="564.10" font-size="10" fill="#ffffff" font-weight="normal" textLength="12.30" lengthAdjust="spacingAndGlyphs" >Tip</text>
<text x="526.00" y="563.30" font-size="10" fill="#bcb8a8" font-weight="normal" textLength="12.30" lengthAdjust="spacingAndGlyphs" >Tip</text>
<rect x="441.30" y="572.50" width="97.40" height="14.90" fill="#e2e2e2" />
<rect x="441.30" y="572.50" width="14.20" height="14.90" fill="url(#btn)" />
<path d="M441.80,586.90 L441.80,573.00 L455.00,573.00" fill="none" stroke="#f8f8f8" stroke-width="1"/>
<path d="M441.30,586.90 L455.00,586.90 L455.00,572.50" fill="none" stroke="#6e6e6e" stroke-width="1"/>
<path d="M446.80,580.75 L450.80,577.15 L450.80,584.35 Z" fill="#ffffff"/>
<path d="M446.00,579.95 L450.00,576.35 L450.00,583.55 Z" fill="#808080"/>
<rect x="482.80" y="572.50" width="15.20" height="14.90" fill="url(#btn)" />
<path d="M483.30,586.90 L483.30,573.00 L497.50,573.00" fill="none" stroke="#f8f8f8" stroke-width="1"/>
<path d="M482.80,586.90 L497.50,586.90 L497.50,572.50" fill="none" stroke="#6e6e6e" stroke-width="1"/>
<rect x="524.50" y="572.50" width="14.20" height="14.90" fill="url(#btn)" />
<path d="M525.00,586.90 L525.00,573.00 L538.20,573.00" fill="none" stroke="#f8f8f8" stroke-width="1"/>
<path d="M524.50,586.90 L538.20,586.90 L538.20,572.50" fill="none" stroke="#6e6e6e" stroke-width="1"/>
<path d="M534.80,580.75 L530.80,577.15 L530.80,584.35 Z" fill="#ffffff"/>
<path d="M534.00,579.95 L530.00,576.35 L530.00,583.55 Z" fill="#808080"/>
<rect x="556.00" y="521.60" width="7.40" height="7.40" fill="#ffffff" />
<path d="M556,529.0 V521.9 H563.4" fill="none" stroke="#606060" stroke-width="1.1"/>
<rect x="556.00" y="539.20" width="7.40" height="7.40" fill="#ffffff" />
<path d="M556,546.6 V539.5 H563.4" fill="none" stroke="#606060" stroke-width="1.1"/>
<text x="566.80" y="528.20" font-size="10.2" fill="#222" font-weight="normal" textLength="29.90" lengthAdjust="spacingAndGlyphs" >Inverse</text>
<text x="567.20" y="545.90" font-size="10.2" fill="#222" font-weight="normal" textLength="61.50" lengthAdjust="spacingAndGlyphs" >Show Vertices</text>
<text x="661.70" y="532.90" font-size="14.8" fill="#0000e8" font-weight="bold" textLength="18.70" lengthAdjust="spacingAndGlyphs" >Re</text>
<rect x="688.00" y="518.00" width="68.40" height="20.50" fill="#00ffff" />
<text x="697.20" y="532.90" font-size="14.6" fill="#000" font-weight="bold" textLength="50.90" lengthAdjust="spacingAndGlyphs" >203712</text>
<text x="559.40" y="562.20" font-size="10.2" fill="#222" font-weight="normal" textLength="54.70" lengthAdjust="spacingAndGlyphs" >Aspect Ratio</text>
<rect x="622.50" y="552.50" width="33.30" height="15.10" fill="#00ffff" />
<text x="623.40" y="562.60" font-size="10.2" fill="#000" font-weight="bold" textLength="31.10" lengthAdjust="spacingAndGlyphs" >infinity</text>
<text x="663.10" y="562.20" font-size="10.2" fill="#222" font-weight="normal" textLength="34.10" lengthAdjust="spacingAndGlyphs" >Velocity</text>
<rect x="708.70" y="552.50" width="47.70" height="15.10" fill="#00ffff" />
<text x="715.50" y="564.10" font-size="11.3" fill="#000" font-weight="normal" textLength="34.50" lengthAdjust="spacingAndGlyphs" >10 m/s</text>
<rect x="557.00" y="572.50" width="98.00" height="14.90" fill="#e2e2e2" />
<rect x="557.00" y="572.50" width="14.00" height="14.90" fill="url(#btn)" />
<path d="M557.50,586.90 L557.50,573.00 L570.50,573.00" fill="none" stroke="#f8f8f8" stroke-width="1"/>
<path d="M557.00,586.90 L570.50,586.90 L570.50,572.50" fill="none" stroke="#6e6e6e" stroke-width="1"/>
<path d="M561.60,579.95 L565.60,576.35 L565.60,583.55 Z" fill="#000"/>
<rect x="624.80" y="572.50" width="14.50" height="14.90" fill="url(#btn)" />
<path d="M625.30,586.90 L625.30,573.00 L638.80,573.00" fill="none" stroke="#f8f8f8" stroke-width="1"/>
<path d="M624.80,586.90 L638.80,586.90 L638.80,572.50" fill="none" stroke="#6e6e6e" stroke-width="1"/>
<rect x="641.00" y="572.50" width="14.00" height="14.90" fill="url(#btn)" />
<path d="M641.50,586.90 L641.50,573.00 L654.50,573.00" fill="none" stroke="#f8f8f8" stroke-width="1"/>
<path d="M641.00,586.90 L654.50,586.90 L654.50,572.50" fill="none" stroke="#6e6e6e" stroke-width="1"/>
<path d="M650.40,579.95 L646.40,576.35 L646.40,583.55 Z" fill="#000"/>
<rect x="659.80" y="572.50" width="98.20" height="14.90" fill="#e2e2e2" />
<rect x="659.80" y="572.50" width="14.50" height="14.90" fill="url(#btn)" />
<path d="M660.30,586.90 L660.30,573.00 L673.80,573.00" fill="none" stroke="#f8f8f8" stroke-width="1"/>
<path d="M659.80,586.90 L673.80,586.90 L673.80,572.50" fill="none" stroke="#6e6e6e" stroke-width="1"/>
<path d="M664.65,579.95 L668.65,576.35 L668.65,583.55 Z" fill="#000"/>
<rect x="691.80" y="572.50" width="15.20" height="14.90" fill="url(#btn)" />
<path d="M692.30,586.90 L692.30,573.00 L706.50,573.00" fill="none" stroke="#f8f8f8" stroke-width="1"/>
<path d="M691.80,586.90 L706.50,586.90 L706.50,572.50" fill="none" stroke="#6e6e6e" stroke-width="1"/>
<rect x="743.50" y="572.50" width="14.50" height="14.90" fill="url(#btn)" />
<path d="M744.00,586.90 L744.00,573.00 L757.50,573.00" fill="none" stroke="#f8f8f8" stroke-width="1"/>
<path d="M743.50,586.90 L757.50,586.90 L757.50,572.50" fill="none" stroke="#6e6e6e" stroke-width="1"/>
<path d="M753.15,579.95 L749.15,576.35 L749.15,583.55 Z" fill="#000"/>
</svg></body></html>
